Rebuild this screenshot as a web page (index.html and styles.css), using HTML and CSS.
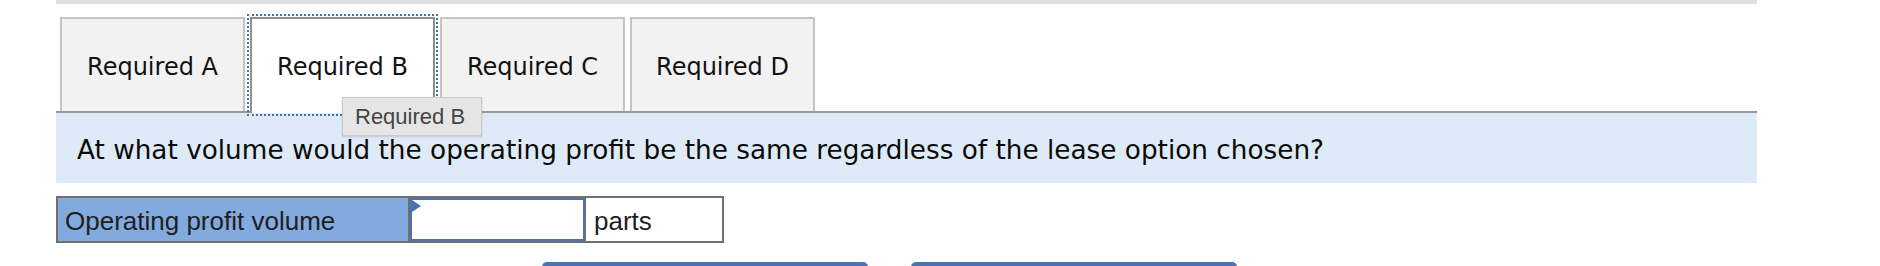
FILE: index.html
```html
<!DOCTYPE html>
<html>
<head>
<meta charset="utf-8">
<link rel="stylesheet" href="styles.css">
</head>
<body>
<div class="page">
  <div class="topline"></div>
  <div class="tabs">
    <div class="tab">Required A</div>
    <div class="tab active">Required B</div>
    <div class="tab">Required C</div>
    <div class="tab">Required D</div>
    <div class="tooltip">Required B</div>
  </div>
  <div class="question">At what volume would the operating profit be the same regardless of the lease option chosen?</div>
  <div class="answer-row">
    <div class="label-cell">Operating profit volume</div>
    <div class="input-cell"><span class="flag"></span></div>
    <div class="unit-cell">parts</div>
  </div>
  <div class="nav">
    <div class="nav-btn"></div>
    <div class="nav-btn"></div>
  </div>
</div>
</body>
</html>
```
FILE: styles.css
```css
html, body {
  margin: 0;
  padding: 0;
  background: #fff;
  overflow: hidden;
}
body {
  font-family: "DejaVu Sans", Verdana, sans-serif;
  color: #111;
}
.page {
  margin-left: 56px;
  width: 1701px;
  position: relative;
}
.topline {
  height: 4px;
  background: #e0e0e0;
}
.tabs {
  display: flex;
  gap: 5px;
  padding-left: 4px;
  margin-top: 13px;
  border-bottom: 2px solid #999;
  position: relative;
  height: 94px;
}
.tab {
  box-sizing: border-box;
  width: 185px;
  height: 94px;
  padding-top: 4px;
  border: 2px solid #c4c4c4;
  border-bottom: none;
  background: #f2f2f2;
  display: flex;
  align-items: center;
  justify-content: center;
  font-size: 24px;
  color: #111;
}
.tab.active {
  background: #fff;
  border-color: #8e8e8e;
  height: 96px;
  padding-bottom: 2px;
  margin-bottom: -2px;
  outline: 2px dotted #3f6fc4;
  outline-offset: 1px;
  position: relative;
  z-index: 1;
}
.tooltip {
  position: absolute;
  left: 286px;
  top: 80px;
  width: 140px;
  height: 39px;
  box-sizing: border-box;
  background: #e5e5e5;
  border: 1px solid #c9c9c9;
  box-shadow: 0 1px 2px rgba(0,0,0,0.15);
  font-family: "Liberation Sans", Arial, sans-serif;
  font-size: 22px;
  color: #444;
  padding-left: 12px;
  display: flex;
  align-items: center;
  z-index: 2;
}
.question {
  background: #deeaf7;
  height: 70px;
  padding-left: 21px;
  padding-top: 4px;
  box-sizing: border-box;
  display: flex;
  align-items: center;
  font-size: 26.3px;
  color: #0a0a0a;
}
.answer-row {
  display: inline-flex;
  margin-top: 13px;
  border: 2px solid #707070;
  height: 43px;
  font-family: "Liberation Sans", Arial, sans-serif;
  font-size: 26px;
  color: #1e1e1e;
  vertical-align: top;
}
.label-cell {
  width: 343px;
  padding-left: 7px;
  padding-top: 4px;
  box-sizing: content-box;
  background: #82aade;
  border-right: 2px solid #707070;
  display: flex;
  align-items: center;
}
.input-cell {
  width: 171px;
  border: 2px solid #4a72b0;
  background: #fff;
  position: relative;
}
.flag {
  position: absolute;
  left: 0;
  top: 0;
  width: 0;
  height: 0;
  border-top: 6px solid transparent;
  border-bottom: 6px solid transparent;
  border-left: 9px solid #4a72b0;
}
.unit-cell {
  width: 128px;
  padding-left: 8px;
  padding-top: 4px;
  border-left: 1px solid #707070;
  background: #fff;
  display: flex;
  align-items: center;
}
.nav {
  display: flex;
  gap: 43px;
  padding-left: 486px;
  margin-top: 19px;
}
.nav-btn {
  width: 326px;
  height: 44px;
  background: #4b73b3;
  border-radius: 5px;
}
```
